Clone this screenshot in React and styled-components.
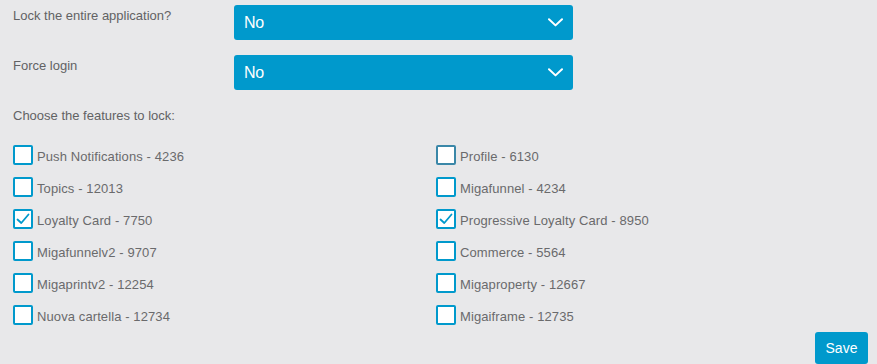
import React, { useState } from 'react'
import styled, { createGlobalStyle } from 'styled-components'

const GlobalStyle = createGlobalStyle`
    html, body {
        margin: 0;
        padding: 0;
        background: #e8e8ea;
        font-family: "Liberation Sans", Arial, sans-serif;
    }
`

const features = [
    { name: 'Push Notifications', id: 4236, checked: false },
    { name: 'Profile', id: 6130, checked: false, dark: true },
    { name: 'Topics', id: 12013, checked: false },
    { name: 'Migafunnel', id: 4234, checked: false },
    { name: 'Loyalty Card', id: 7750, checked: true },
    { name: 'Progressive Loyalty Card', id: 8950, checked: true },
    { name: 'Migafunnelv2', id: 9707, checked: false },
    { name: 'Commerce', id: 5564, checked: false },
    { name: 'Migaprintv2', id: 12254, checked: false },
    { name: 'Migaproperty', id: 12667, checked: false },
    { name: 'Nuova cartella', id: 12734, checked: false },
    { name: 'Migaiframe', id: 12735, checked: false },
]

function Chevron() {
    return (
        <svg width="15" height="9" viewBox="0 0 15 9">
            <path d="M1 1.2 L7.5 7.4 L14 1.2" fill="none" stroke="#fff" strokeWidth="2" strokeLinecap="round" strokeLinejoin="round" />
        </svg>
    )
}

function Check() {
    return (
        <svg width="16" height="16" viewBox="0 0 16 16">
            <path d="M2.5 8.5 L6.3 12 L13.5 3.5" fill="none" stroke="#0099cc" strokeWidth="1.8" strokeLinecap="round" strokeLinejoin="round" />
        </svg>
    )
}

function App() {
    const [items, setItems] = useState(features)

    const toggle = (id) => {
        setItems(items.map(el => el.id === id ? { ...el, checked: !el.checked } : el))
    }

    return (
        <Page>
            <GlobalStyle />
            <FieldRow>
                <Label>Lock the entire application?</Label>
                <Select>
                    <span>No</span>
                    <Chevron />
                </Select>
            </FieldRow>
            <FieldRow>
                <Label>Force login</Label>
                <Select>
                    <span>No</span>
                    <Chevron />
                </Select>
            </FieldRow>
            <Heading>Choose the features to lock:</Heading>
            <Features>
                {items.map(el => (
                    <Feature key={el.id} onClick={() => toggle(el.id)}>
                        <Box $dark={el.dark}>{el.checked && <Check />}</Box>
                        <span>{el.name} - {el.id}</span>
                    </Feature>
                ))}
            </Features>
            <Actions>
                <SaveButton>Save</SaveButton>
            </Actions>
        </Page>
    )
}

export default App

const Page = styled.div`
    width: 877px;
    height: 364px;
    box-sizing: border-box;
    padding: 5px 9px 0 13px;
    overflow: hidden;
`

const FieldRow = styled.div`
    display: grid;
    grid-template-columns: 221px 339px;
    height: 35px;
    margin-bottom: 15px;
`

const Label = styled.div`
    font-size: 13px;
    line-height: 16px;
    color: #626264;
    padding-top: 3px;
`

const Select = styled.div`
    background: #0099cc;
    border-radius: 3px;
    display: flex;
    align-items: center;
    justify-content: space-between;
    padding: 0 10px 0 10px;
    color: #fff;
    font-size: 16px;
    cursor: pointer;

    span {
        letter-spacing: -0.3px;
    }
`

const Heading = styled(Label)`
    height: 40px;
    box-sizing: border-box;
`

const Features = styled.div`
    display: grid;
    grid-template-columns: 423px 1fr;
    row-gap: 12px;
`

const Feature = styled.label`
    display: flex;
    align-items: center;
    gap: 4px;
    height: 20px;
    font-size: 13px;
    color: #6a6a6c;
    cursor: pointer;

    span {
        padding-top: 2px;
        letter-spacing: 0.1px;
    }
`

const Box = styled.div`
    width: 20px;
    height: 20px;
    box-sizing: border-box;
    border: 2px solid ${p => p.$dark ? '#3a87a8' : '#0099cc'};
    border-radius: 2px;
    background: #fff;
    display: flex;
    align-items: center;
    justify-content: center;
`

const Actions = styled.div`
    display: flex;
    justify-content: flex-end;
    margin-top: 7px;
`

const SaveButton = styled.button`
    width: 53px;
    height: 32px;
    border: none;
    border-radius: 3px;
    background: #0099cc;
    color: #fff;
    font-family: "Liberation Sans", Arial, sans-serif;
    font-size: 14px;
    cursor: pointer;
`
